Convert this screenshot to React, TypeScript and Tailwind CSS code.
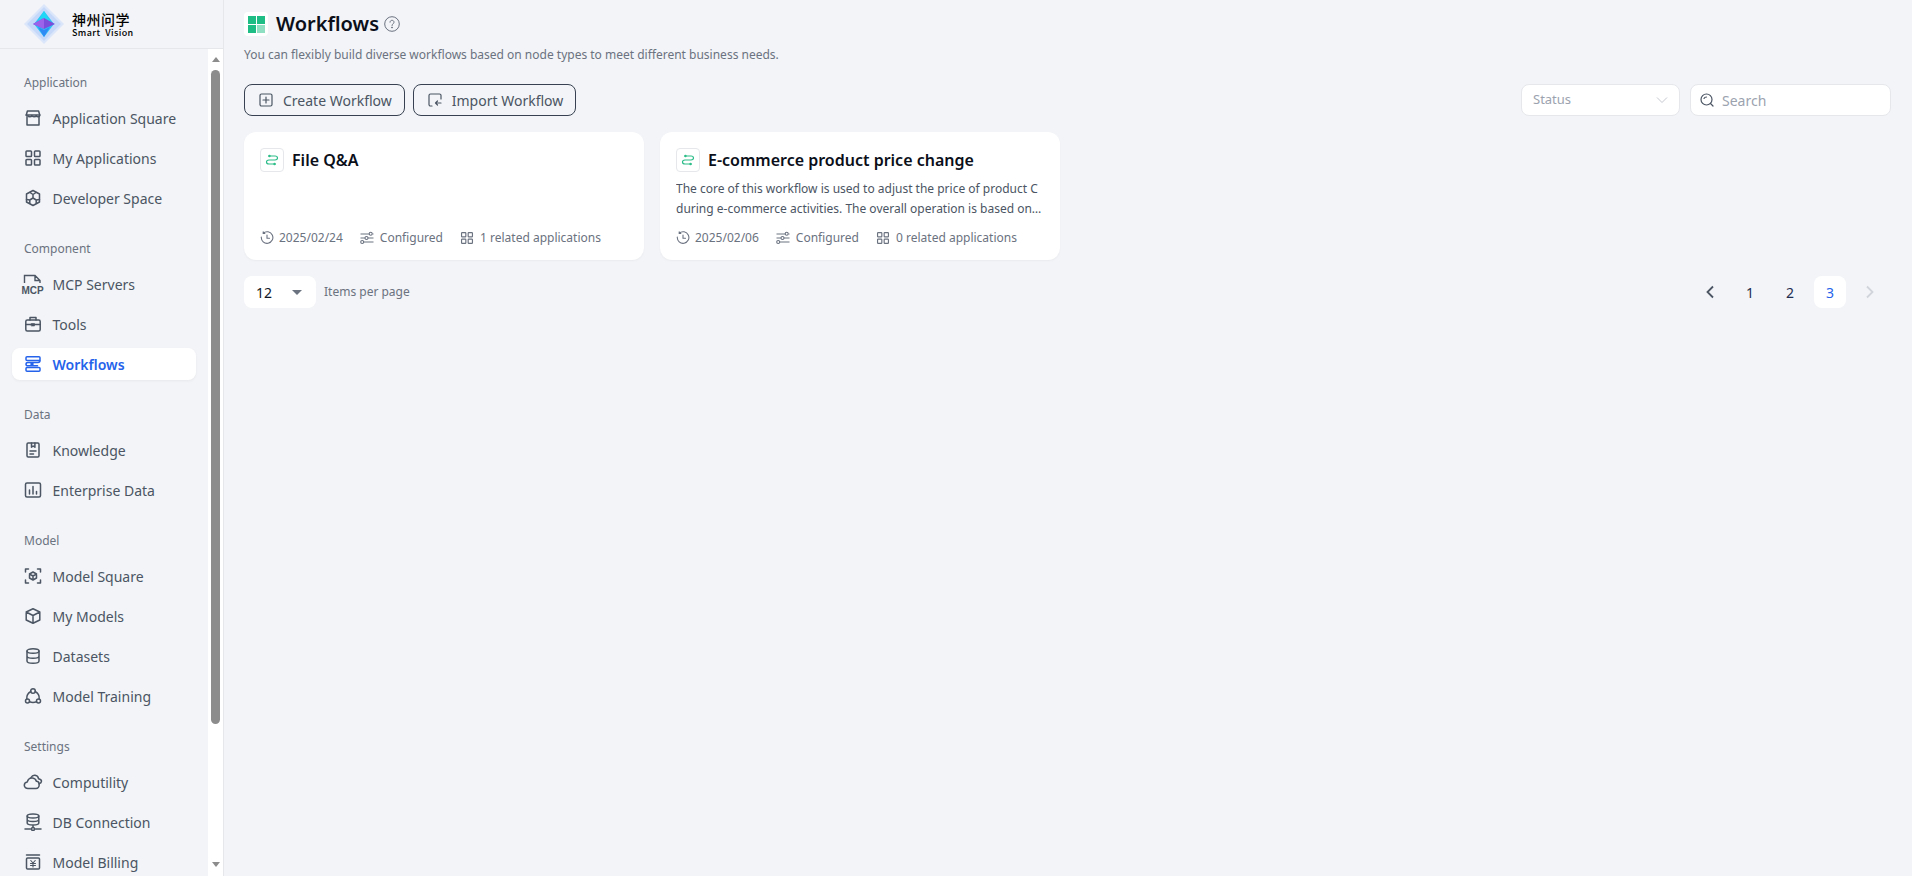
import type { ReactNode } from 'react';

const stroke = {
  fill: 'none',
  stroke: 'currentColor',
  strokeWidth: 1.5,
  strokeLinecap: 'round' as const,
  strokeLinejoin: 'round' as const,
};

const Ico = ({ children, size = 18 }: { children: ReactNode; size?: number }) => (
  <svg width={size} height={size} viewBox="0 0 18 18" className="shrink-0" {...stroke}>
    {children}
  </svg>
);

const StoreIcon = () => (
  <Ico>
    <path d="M2.2 6.2 3.4 2h11.2l1.2 4.2c0 1.2-1 1.6-1.7 1.6-.8 0-1.6-.5-1.9-1.4-.3.9-1.2 1.4-2.2 1.4S8 7.3 7.8 6.4c-.3.9-1.2 1.4-2.1 1.4-.7 0-1.5-.4-1.9-1.2" />
    <path d="M2.2 6h13.6M3 7.5V16h12V7.5" />
  </Ico>
);

const GridIcon = ({ size = 18 }: { size?: number }) => (
  <Ico size={size}>
    <rect x="2" y="2" width="5.5" height="5.5" rx=".8" />
    <rect x="10.5" y="2" width="5.5" height="5.5" rx=".8" />
    <rect x="2" y="10.5" width="5.5" height="5.5" rx=".8" />
    <rect x="10.5" y="10.5" width="5.5" height="5.5" rx=".8" />
  </Ico>
);

const DevIcon = () => (
  <Ico>
    <path d="M9 1.5 15.5 5v8L9 16.5 2.5 13V5z" />
    <path d="M9 5.5v3.5M9 9l-3.2 2M9 9l3.2 2M6 3.5 9 5.5l3-2M2.5 10.5 5.8 11v3M15.5 10.5l-3.300.5v3" />
  </Ico>
);

const McpIcon = () => (
  <svg width="24" height="24" viewBox="0 0 24 24" className="shrink-0">
    <path d="M3.500 11V3.500h10.500l5 5V11M14 3.500v5h5" fill="none" stroke="currentColor" strokeWidth="1.400" />
    <text x="0.500" y="22" fontFamily="'Liberation Sans', sans-serif" fontSize="10" fontWeight="700" fill="currentColor">
      MCP
    </text>
  </svg>
);

const ToolsIcon = () => (
  <Ico>
    <rect x="1.800" y="5" width="14.400" height="11" rx="1.500" />
    <path d="M6 5V2.500h6V5M1.800 9.500h14.400" />
    <rect x="7.500" y="8.500" width="3" height="2.500" fill="currentColor" strokeWidth="0.600" />
  </Ico>
);

const FlowIcon = () => (
  <Ico>
    <rect x="2" y="1.800" width="14" height="3.800" rx="1" />
    <rect x="2" y="12.400" width="14" height="3.800" rx="1" />
    <path d="M16 5.600c0 1.600-1 1.900-2 1.900H4C2.800 7.500 2 8.200 2 9.200s.8 1.600 2 1.600h9.500" />
    <circle cx="8" cy="9" r="1" fill="currentColor" />
  </Ico>
);

const BookIcon = () => (
  <Ico>
    <rect x="3" y="2" width="12" height="14" rx="1.200" />
    <path d="M7.500 2v4.200L9.200 5l1.700 1.200V2M6 10h6M6 13h3.500" />
  </Ico>
);

const ChartIcon = () => (
  <Ico>
    <rect x="1.500" y="2" width="15" height="14" rx="1.500" />
    <path d="M5.500 13V9M9 13V5.500M12.500 13v-2.500" />
  </Ico>
);

const ScanIcon = () => (
  <Ico>
    <path d="M1.500 5V2h3M13.500 2h3v3M16.500 13v3h-3M4.500 16h-3v-3" />
    <path d="M9 5 12.500 7v4L9 13l-3.500-2V7zM5.500 7 9 9l3.500-2M9 9v4" />
  </Ico>
);

const BoxIcon = () => (
  <Ico>
    <path d="M9 1.800 15.800 5v8L9 16.200 2.200 13V5zM2.200 5 9 8.500 15.800 5M9 8.500v7.700" />
  </Ico>
);

const DbIcon = () => (
  <Ico>
    <ellipse cx="9" cy="4" rx="6" ry="2.300" />
    <path d="M3 4v10c0 1.300 2.700 2.300 6 2.300s6-1 6-2.300V4M3 9c0 1.300 2.700 2.300 6 2.300s6-1 6-2.300" />
  </Ico>
);

const TrainIcon = () => (
  <Ico>
    <circle cx="9" cy="4" r="2.300" />
    <circle cx="3.500" cy="14" r="2" />
    <circle cx="14.500" cy="14" r="2" />
    <path d="M6.800 4.500C4 6 2.500 8.800 2.800 12M11.200 4.500C14 6 15.500 8.800 15.200 12M5.500 14.800c2.200.8 4.800.8 7 0" />
  </Ico>
);

const CloudIcon = () => (
  <svg width="20" height="18" viewBox="0 0 20 18" className="shrink-0" {...stroke}>
    <path d="M5 15.500c-2 0-3.700-1.400-3.700-3.300 0-1.700 1.300-3.100 3-3.300C5 6.300 7.200 4.700 9.500 5c1.800.2 3.400 1.500 3.900 3.300 1.500 0 2.800 1.200 2.800 3.500 0 2-1.500 3.700-3.200 3.700z" />
    <path d="M8 4.500C8.800 3 10.300 2 12 2.200c1.900.2 3.300 1.700 3.500 3.500 1.500.3 3 1.200 3 2.500 0 1-1 2-2.500 2.500" />
  </svg>
);

const DbLinkIcon = () => (
  <Ico>
    <ellipse cx="9" cy="3" rx="5.800" ry="2" />
    <path d="M3.200 3v7c0 1.100 2.600 2 5.800 2s5.800-.9 5.800-2V3M3.200 6.500c0 1.100 2.600 2 5.800 2s5.800-.9 5.800-2M9 12v2" />
    <path d="M1 16h5.500M11.500 16H17" />
    <circle cx="9" cy="16" r="1.500" />
  </Ico>
);

const BillIcon = () => (
  <Ico>
    <path d="M2.500 2h13" />
    <rect x="2.500" y="5" width="13" height="11" rx="1" />
    <path d="m6.800 7.500 2.200 2.500 2.200-2.500M6.500 10.500h5M6.500 12.500h5M9 10v4" strokeWidth="1.100" />
  </Ico>
);

const SwapIcon = () => (
  <svg width="14" height="14" viewBox="0 0 14 14" fill="none" stroke="#2dbd8a" strokeWidth="1.200" strokeLinecap="round">
    <path d="M3.500 3H10c1.800 0 2.500 1 2.500 2S11.800 7 10 7H4C2.200 7 1.500 8 1.500 9s.7 2 2.500 2h6.500" />
    <circle cx="4.500" cy="3" r="1.200" fill="#2dbd8a" stroke="none" />
    <circle cx="9.500" cy="11" r="1.200" fill="#2dbd8a" stroke="none" />
  </svg>
);

const ClockIcon = () => (
  <svg width="14" height="14" viewBox="0 0 14 14" fill="none" stroke="currentColor" strokeWidth="1.100" strokeLinecap="round" className="shrink-0">
    <path d="M3.200 2.200A5.800 5.800 0 1 1 1.300 6M3.200 .8v1.600h1.600M7 4v3.300h2.500" />
  </svg>
);

const SlidersIcon = () => (
  <svg width="14" height="14" viewBox="0 0 14 14" fill="none" stroke="currentColor" strokeWidth="1.100" className="shrink-0">
    <path d="M.5 3H9M12.500 3h1M.5 7H5M8 7h5.500M4 11h9.500" />
    <circle cx="10.700" cy="2.800" r="1.500" />
    <circle cx="6.500" cy="7" r="1.500" />
    <circle cx="2.200" cy="11" r="1.500" />
  </svg>
);

const Logo = () => (
  <svg width="40" height="40" viewBox="0 0 40 40" className="shrink-0">
    <path d="M20 0 40 20 20 40 0 20z" fill="#dbe6fb" />
    <path d="M20 3 37 20 20 37 3 20z" fill="#c5d8fa" />
    <path d="M20 7 30 20 20 33 10 20z" fill="#29c5f6" />
    <path d="M20 7 26 17 14 17z" fill="#1fd8f5" />
    <path d="M9 20 20 14 31 20 20 25z" fill="#7c4ddb" />
    <path d="M9 20 20 25V14z" fill="#9a63ea" />
    <path d="M14 23 20 26 26 23 20 33z" fill="#2f8af5" />
  </svg>
);

type Item = { label: string; icon: ReactNode; active?: boolean };

const sections: { title: string; items: Item[] }[] = [
  {
    title: 'Application',
    items: [
      { label: 'Application Square', icon: <StoreIcon /> },
      { label: 'My Applications', icon: <GridIcon /> },
      { label: 'Developer Space', icon: <DevIcon /> },
    ],
  },
  {
    title: 'Component',
    items: [
      { label: 'MCP Servers', icon: <McpIcon /> },
      { label: 'Tools', icon: <ToolsIcon /> },
      { label: 'Workflows', icon: <FlowIcon />, active: true },
    ],
  },
  {
    title: 'Data',
    items: [
      { label: 'Knowledge', icon: <BookIcon /> },
      { label: 'Enterprise Data', icon: <ChartIcon /> },
    ],
  },
  {
    title: 'Model',
    items: [
      { label: 'Model Square', icon: <ScanIcon /> },
      { label: 'My Models', icon: <BoxIcon /> },
      { label: 'Datasets', icon: <DbIcon /> },
      { label: 'Model Training', icon: <TrainIcon /> },
    ],
  },
  {
    title: 'Settings',
    items: [
      { label: 'Computility', icon: <CloudIcon /> },
      { label: 'DB Connection', icon: <DbLinkIcon /> },
      { label: 'Model Billing', icon: <BillIcon /> },
    ],
  },
];

const NavItem = ({ item }: { item: Item }) => (
  <div
    className={
      item.active
        ? 'flex h-8 items-center rounded-lg bg-white text-[14px] font-semibold text-[#2563eb] shadow-[0_1px_3px_rgba(0,0,0,0.05)]'
        : 'flex h-8 items-center rounded-lg text-[14px] text-[#4b5563]'
    }
  >
    <span className="flex w-[40px] shrink-0 items-center justify-center pl-[1px]">{item.icon}</span>
    <span className="pl-[0.5px]">{item.label}</span>
  </div>
);

const Sidebar = () => (
  <aside className="flex h-full w-[224px] shrink-0 flex-col border-r border-[#e5e7eb]">
    <div className="flex h-[49px] shrink-0 items-center gap-[8px] overflow-hidden border-b border-[#e5e7eb] pl-[24px]">
      <Logo />
      <div className="flex flex-col font-['Noto_Sans_CJK_SC',sans-serif] text-black">
        <span className="text-[14px] leading-[16px] font-medium tracking-[0.5px]">神州问学</span>
        <span className="text-[9px] leading-[11px] font-medium tracking-[0.4px] whitespace-pre">Smart  Vision</span>
      </div>
    </div>
    <div className="flex min-h-0 flex-1">
      <nav className="w-[208px] shrink-0 overflow-hidden px-[12px] pt-[25px]">
        {sections.map((s) => (
          <div key={s.title} className="mb-[26px]">
            <div className="mb-[10px] h-[18px] pl-[12px] text-[12px] leading-[18px] text-[#6b7280]">{s.title}</div>
            <div className="flex flex-col gap-2">
              {s.items.map((it) => (
                <NavItem key={it.label} item={it} />
              ))}
            </div>
          </div>
        ))}
      </nav>
      <div className="flex w-[15px] shrink-0 flex-col items-center bg-white pt-[8px]">
        <div className="h-0 w-0 border-x-[4.500px] border-b-[5px] border-x-transparent border-b-[#8c8c8c]" />
        <div className="mt-[8px] h-[654px] w-[9px] rounded-[4.500px] bg-[#8c8c8c]" />
        <div className="mt-auto mb-[9px] h-0 w-0 border-x-[4.500px] border-t-[5px] border-x-transparent border-t-[#8c8c8c]" />
      </div>
    </div>
  </aside>
);

const Meta = ({ date, count }: { date: string; count: number }) => (
  <div className="flex items-center text-[12px] leading-[16px] text-[#6b7280]">
    <span className="flex items-center gap-[5px]">
      <ClockIcon />
      {date}
    </span>
    <span className="ml-[17px] flex items-center gap-[6px]">
      <SlidersIcon />
      Configured
    </span>
    <span className="ml-[17px] flex items-center gap-[6px]">
      <GridIcon size={14} />
      {count} related applications
    </span>
  </div>
);

const Card = ({ title, desc, date, count }: { title: string; desc?: string; date: string; count: number }) => (
  <div className="flex h-[128px] w-[400px] flex-col rounded-xl bg-white px-4 pt-4 pb-[14px] shadow-[0_1px_2px_rgba(0,0,0,0.04)]">
    <div className="flex items-center gap-2">
      <span className="flex h-6 w-6 items-center justify-center rounded-[4px] border border-[#e5e7eb] bg-white">
        <SwapIcon />
      </span>
      <span className="text-[16px] leading-6 font-semibold text-[#0b0f19]">{title}</span>
    </div>
    {desc && (
      <p className="mt-[7px] line-clamp-2 h-[40px] w-[368px] text-[12px] leading-[20px] text-[#4b5563]">{desc}</p>
    )}
    <div className="mt-auto">
      <Meta date={date} count={count} />
    </div>
  </div>
);

const OutlineButton = ({ icon, label }: { icon: ReactNode; label: string }) => (
  <button className="flex h-8 items-center gap-[9px] rounded-lg border border-[#374151] pl-[13px] pr-[12px] text-[14px] text-[#4b5563]">
    {icon}
    {label}
  </button>
);

export default function App() {
  return (
    <div className="flex h-screen w-full overflow-hidden bg-[#f2f4f7] font-['Noto_Sans',sans-serif]">
      <Sidebar />
      <main className="min-w-0 flex-1 pl-[20px] pr-[21px] pt-[12px]">
        <div className="flex h-6 items-center">
          <span className="flex h-6 w-6 items-center justify-center rounded bg-white">
            <span className="grid grid-cols-2 gap-[1px]">
              <span className="h-[8px] w-[8px] bg-[#1dbd85]" />
              <span className="h-[8px] w-[8px] bg-[#1dbd85]" />
              <span className="h-[8px] w-[8px] bg-[#1dbd85]" />
              <span className="h-[8px] w-[8px] bg-[#8fe0c2]" />
            </span>
          </span>
          <h1 className="ml-[8px] text-[20px] leading-6 font-semibold text-[#0b0f19]">Workflows</h1>
          <svg width="16" height="16" viewBox="0 0 16 16" fill="none" stroke="#6b7280" strokeWidth="1" className="ml-[5px]">
            <circle cx="8" cy="8" r="7.300" />
            <path d="M6 6.200C6 5 7 4.300 8 4.300s2 .7 2 1.900c0 1.600-2 1.600-2 3.300" strokeLinecap="round" />
            <circle cx="8" cy="11.500" r=".5" fill="#6b7280" />
          </svg>
        </div>
        <p className="mt-[10px] text-[12px] leading-[18px] text-[#6b7280]">
          You can flexibly build diverse workflows based on node types to meet different business needs.
        </p>
        <div className="mt-[20px] flex items-center justify-between">
          <div className="flex gap-2">
            <OutlineButton
              icon={
                <svg width="16" height="16" viewBox="0 0 16 16" fill="none" stroke="currentColor" strokeWidth="1.200" strokeLinecap="round">
                  <rect x="2" y="2" width="12" height="12" rx="1.500" />
                  <path d="M8 5v6M5 8h6" />
                </svg>
              }
              label="Create Workflow"
            />
            <OutlineButton
              icon={
                <svg width="16" height="16" viewBox="0 0 16 16" fill="none" stroke="currentColor" strokeWidth="1.200" strokeLinecap="round" strokeLinejoin="round">
                  <path d="M14 7V3.500A1.500 1.500 0 0 0 12.500 2h-9A1.500 1.500 0 0 0 2 3.500v9A1.500 1.500 0 0 0 3.500 14H5" />
                  <path d="M14 11H8.500M10.500 9l-2 2 2 2" />
                </svg>
              }
              label="Import Workflow"
            />
          </div>
          <div className="flex gap-[10px]">
            <div className="flex h-8 w-[159px] items-center justify-between rounded-lg border border-[#e5e7eb] bg-white pl-[11px] pr-[11px] text-[13px] text-[#9ca3af]">
              Status
              <svg width="12" height="12" viewBox="0 0 12 12" fill="none" stroke="#c4c8cf" strokeWidth="1">
                <path d="M1 3.500 6 8.500l5-5" />
              </svg>
            </div>
            <div className="flex h-8 w-[201px] items-center gap-[7px] rounded-lg border border-[#e5e7eb] bg-white pl-[8px] text-[14px] text-[#9ca3af]">
              <svg width="16" height="16" viewBox="0 0 16 16" fill="none" stroke="#4b5563" strokeWidth="1.200" strokeLinecap="round">
                <circle cx="7.500" cy="7.500" r="5.500" />
                <path d="M5 6.500C5.400 5.500 6.400 5 7.500 5M11.500 11.500l2.500 2.500" />
              </svg>
              Search
            </div>
          </div>
        </div>
        <div className="mt-4 flex gap-4">
          <Card title="File Q&A" date="2025/02/24" count={1} />
          <Card
            title="E-commerce product price change"
            desc="The core of this workflow is used to adjust the price of product C during e-commerce activities. The overall operation is based on the current pricing strategy of each product and its stock."
            date="2025/02/06"
            count={0}
          />
        </div>
        <div className="mt-4 flex items-center justify-between">
          <div className="flex items-center">
            <div className="flex h-8 w-[72px] items-center justify-between rounded-lg bg-white pl-[12px] pr-[14px] text-[14px] text-[#111827]">
              12
              <span className="h-0 w-0 border-x-[5px] border-t-[5px] border-x-transparent border-t-[#6b7280]" />
            </div>
            <span className="ml-[8px] text-[12px] text-[#6b7280]">Items per page</span>
          </div>
          <div className="flex items-center gap-2 pr-[5px] text-[14px] text-[#1f2d50]">
            <span className="flex h-8 w-8 items-center justify-center">
              <svg width="10" height="14" viewBox="0 0 10 14" fill="none" stroke="#4b5563" strokeWidth="1.800">
                <path d="M8 1.500 2.500 7 8 12.500" />
              </svg>
            </span>
            <span className="flex h-8 w-8 items-center justify-center">1</span>
            <span className="flex h-8 w-8 items-center justify-center">2</span>
            <span className="flex h-8 w-8 items-center justify-center rounded-lg bg-white text-[#2563eb]">3</span>
            <span className="flex h-8 w-8 items-center justify-center">
              <svg width="10" height="14" viewBox="0 0 10 14" fill="none" stroke="#d1d5db" strokeWidth="1.800">
                <path d="M2 1.500 7.500 7 2 12.500" />
              </svg>
            </span>
          </div>
        </div>
      </main>
    </div>
  );
}
